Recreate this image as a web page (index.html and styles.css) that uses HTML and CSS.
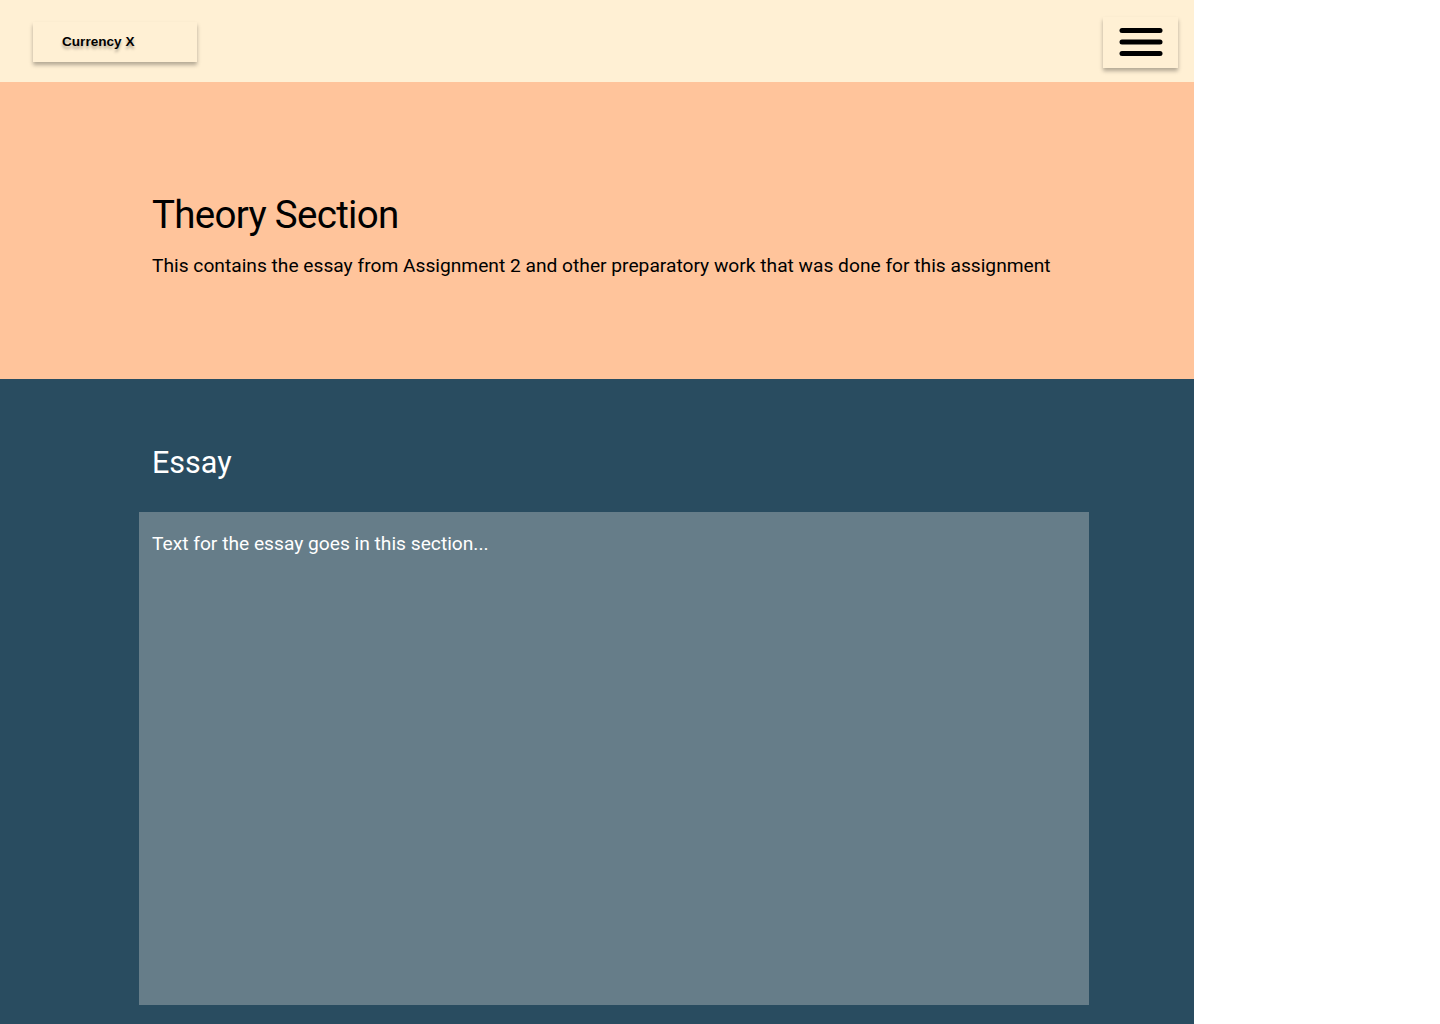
FILE: index.html
```html
<!DOCTYPE html>
<html>
<head>
<meta charset="utf-8">
<title>Theory Section</title>
<link rel="stylesheet" href="styles.css">
</head>
<body>
<div class="page">
  <header class="topbar">
    <div class="logo">Currency X</div>
    <button class="menu" aria-label="Menu">
      <svg width="46" height="30" viewBox="0 0 46 30"><g stroke="#000" stroke-width="5" stroke-linecap="round"><line x1="4" y1="3.5" x2="42" y2="3.5"/><line x1="4" y1="15" x2="42" y2="15"/><line x1="4" y1="26.5" x2="42" y2="26.5"/></g></svg>
    </button>
  </header>
  <section class="hero">
    <h1 class="hero-title">Theory Section</h1>
    <p class="hero-sub">This contains the essay from Assignment 2 and other preparatory work that was done for this assignment</p>
  </section>
  <section class="essay">
    <h2 class="essay-title">Essay</h2>
    <div class="essay-box">Text for the essay goes in this section...</div>
  </section>
</div>
</body>
</html>
```
FILE: styles.css
```css
html, body { margin: 0; padding: 0; background: #fff; }
body { font-family: Roboto, "Noto Sans", sans-serif; }
.page { width: 1194px; }
.topbar {
  height: 82px;
  background: #FFF0D4;
  display: flex;
  justify-content: space-between;
  align-items: flex-start;
  padding: 0 16px 0 33px;
  box-sizing: border-box;
}
.logo {
  margin-top: 22px;
  width: 164px;
  height: 40px;
  box-sizing: border-box;
  padding: 0 0 2px 29px;
  display: flex;
  align-items: center;
  background: #FFF0D4;
  box-shadow: 0 3px 4px rgba(0,0,0,0.3);
  font-family: "Liberation Sans", Arial, sans-serif;
  font-weight: 700;
  font-size: 13.6px;
  color: #000;
  text-shadow: 0 3px 3px rgba(0,0,0,0.3);
}
.menu {
  margin-top: 17px;
  width: 75px;
  height: 51px;
  border: 0;
  padding: 0 0 2px;
  background: #FFF0D4;
  box-shadow: 0 3px 4px rgba(0,0,0,0.3);
  display: flex;
  align-items: center;
  justify-content: center;
}
.hero {
  background: #FFC49B;
  height: 297px;
  box-sizing: border-box;
  padding: 109px 0 0 152px;
}
.hero-title {
  margin: 0;
  font-weight: 400;
  font-size: 38.5px;
  letter-spacing: -0.7px;
  line-height: 48px;
  color: #000;
}
.hero-sub {
  margin: 15px 0 0;
  font-size: 19.2px;
  line-height: 24px;
  color: #000;
}
.essay {
  background: #294C60;
  min-height: 645px;
  box-sizing: border-box;
  padding: 65px 0 19px 0;
}
.essay-title {
  margin: 0 0 0 152px;
  font-weight: 400;
  font-size: 30.5px;
  line-height: 38px;
  color: #fff;
}
.essay-box {
  margin: 30px 0 0 139px;
  width: 950px;
  height: 493px;
  box-sizing: border-box;
  background: #667D89;
  color: #fff;
  font-size: 19.2px;
  padding: 20px 13px;
  line-height: 24px;
}
```
